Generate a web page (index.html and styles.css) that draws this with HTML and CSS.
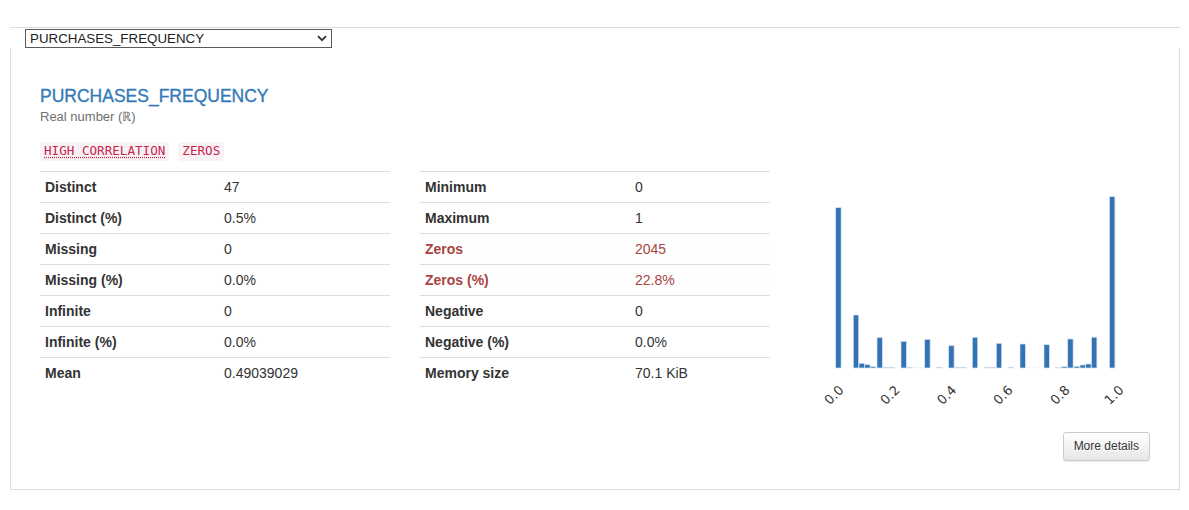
FILE: index.html
```html
<!DOCTYPE html>
<html lang="en">
<head>
<meta charset="utf-8">
<title>PURCHASES_FREQUENCY</title>
<link rel="stylesheet" href="styles.css">
</head>
<body>
<div class="wrap">
  <div class="topbar"></div>
  <div class="picker">
    <div class="select-box">
      <select class="var-select">
        <option>PURCHASES_FREQUENCY</option>
      </select>
      <svg class="chev" width="10" height="7" viewBox="0 0 10 7"><path d="M1 1.2 L5 5.2 L9 1.2" fill="none" stroke="#333" stroke-width="1.8"/></svg>
    </div>
  </div>
  <div class="panel">
    <div class="head">
      <h4 class="var-title">PURCHASES_FREQUENCY</h4>
      <div class="var-type">Real number (ℝ)</div>
      <div class="badges">
        <code class="badge"><abbr class="abbr">HIGH CORRELATION</abbr></code>
        <code class="badge">ZEROS</code>
      </div>
    </div>
    <div class="stats">
      <div class="col">
        <table class="tbl tbl-left">
          <colgroup><col class="c-lab-left"><col></colgroup>
          <tbody>
            <tr><th>Distinct</th><td>47</td></tr>
            <tr><th>Distinct (%)</th><td>0.5%</td></tr>
            <tr><th>Missing</th><td>0</td></tr>
            <tr><th>Missing (%)</th><td>0.0%</td></tr>
            <tr><th>Infinite</th><td>0</td></tr>
            <tr><th>Infinite (%)</th><td>0.0%</td></tr>
            <tr><th>Mean</th><td>0.49039029</td></tr>
          </tbody>
        </table>
      </div>
      <div class="col">
        <table class="tbl tbl-right">
          <colgroup><col class="c-lab-right"><col></colgroup>
          <tbody>
            <tr><th>Minimum</th><td>0</td></tr>
            <tr><th>Maximum</th><td>1</td></tr>
            <tr class="alert"><th>Zeros</th><td>2045</td></tr>
            <tr class="alert"><th>Zeros (%)</th><td>22.8%</td></tr>
            <tr><th>Negative</th><td>0</td></tr>
            <tr><th>Negative (%)</th><td>0.0%</td></tr>
            <tr><th>Memory size</th><td>70.1 KiB</td></tr>
          </tbody>
        </table>
      </div>
      <div class="col">
        <svg class="hist" width="350" height="240" viewBox="0 0 350 240">
          <g fill="#3373b3" stroke="#d3e2f2" stroke-width="0.7">
            <rect x="35.7" y="36.7" width="5.4" height="160.3"/>
            <rect x="53.3" y="144" width="5.4" height="53"/>
            <rect x="59.0" y="192.3" width="5.4" height="4.7"/>
            <rect x="64.7" y="193.7" width="5.4" height="3.3"/>
            <rect x="70.3" y="195.7" width="5.4" height="1.3"/>
            <rect x="77.0" y="166.7" width="5.4" height="30.3"/>
            <rect x="83.0" y="196.2" width="5.4" height="0.8"/>
            <rect x="89.0" y="196.2" width="5.4" height="0.8"/>
            <rect x="101.0" y="170.3" width="5.4" height="26.7"/>
            <rect x="107.0" y="196.2" width="5.4" height="0.8"/>
            <rect x="124.7" y="168.3" width="5.4" height="28.7"/>
            <rect x="136.7" y="196.2" width="5.4" height="0.8"/>
            <rect x="148.7" y="174.7" width="5.4" height="22.3"/>
            <rect x="154.7" y="196.2" width="5.4" height="0.8"/>
            <rect x="160.7" y="196.2" width="5.4" height="0.8"/>
            <rect x="172.3" y="166.3" width="5.4" height="30.7"/>
            <rect x="184.7" y="196.2" width="5.4" height="0.8"/>
            <rect x="190.7" y="196.2" width="5.4" height="0.8"/>
            <rect x="196.3" y="172.3" width="5.4" height="24.7"/>
            <rect x="208.0" y="196.2" width="5.4" height="0.8"/>
            <rect x="220.0" y="173.0" width="5.4" height="24"/>
            <rect x="244.0" y="173.7" width="5.4" height="23.3"/>
            <rect x="255.7" y="196.4" width="5.4" height="0.6"/>
            <rect x="261.7" y="195.7" width="5.4" height="1.3"/>
            <rect x="267.7" y="168.0" width="5.4" height="29"/>
            <rect x="274.0" y="195.3" width="5.4" height="1.7"/>
            <rect x="280.0" y="194.0" width="5.4" height="3"/>
            <rect x="285.7" y="193.0" width="5.4" height="4"/>
            <rect x="291.5" y="166.2" width="5.4" height="30.8"/>
            <rect x="309.5" y="25.7" width="5.4" height="171.3"/>
          </g>
          <g fill="#dfeaf6">
            <rect x="112.5" y="196.5" width="5.4" height="0.6"/>
            <rect x="118.3" y="196.5" width="5.4" height="0.6"/>
            <rect x="226.3" y="196.5" width="5.4" height="0.6"/>
            <rect x="232.3" y="196.5" width="5.4" height="0.6"/>
          </g>
          <g class="ticks" font-family="DejaVu Sans, sans-serif" font-size="13" fill="#333" text-anchor="middle">
            <text x="34" y="228.5" transform="rotate(-45 34 224)">0.0</text>
            <text x="90" y="228.5" transform="rotate(-45 90 224)">0.2</text>
            <text x="146.7" y="228.5" transform="rotate(-45 146.7 224)">0.4</text>
            <text x="203" y="228.5" transform="rotate(-45 203 224)">0.6</text>
            <text x="260" y="228.5" transform="rotate(-45 260 224)">0.8</text>
            <text x="314" y="228.5" transform="rotate(-45 314 224)">1.0</text>
          </g>
        </svg>
      </div>
    </div>
    <div class="foot">
      <button class="btn" type="button">More details</button>
    </div>
  </div>
</div>
</body>
</html>
```
FILE: styles.css
```css
html, body {
  margin: 0;
  padding: 0;
  background: #fff;
}
body {
  font-family: "Liberation Sans", Arial, Helvetica, sans-serif;
  font-size: 14px;
  color: #333;
}
.wrap {
  margin-left: 10px;
  width: 1170px;
}
.topbar {
  height: 27px;
  border-bottom: 1px solid #dddde0;
}
.picker {
  padding: 1px 0 0 15px;
  height: 19px;
}
.select-box {
  position: relative;
  display: inline-block;
  width: 307px;
  height: 19px;
}
.var-select {
  -webkit-appearance: none;
  appearance: none;
  box-sizing: border-box;
  width: 307px;
  height: 19px;
  margin: 0;
  padding: 0 20px 0 4px;
  border: 1px solid #5a5a5a;
  border-radius: 0;
  background: #fff;
  font-family: "Liberation Sans", Arial, sans-serif;
  font-size: 13.333px;
  line-height: 17px;
  color: #222;
}
.chev {
  position: absolute;
  right: 5px;
  top: 6px;
  pointer-events: none;
}
.panel {
  border: 1px solid #dddde0;
  border-top: 0;
  padding: 38px 14px 28px;
}
.head {
  padding: 0 15px;
}
.var-title {
  margin: 0 0 2px;
  font-size: 17.5px;
  line-height: 20px;
  font-weight: 400;
  color: #337ab7;
  -webkit-text-stroke: 0.35px #337ab7;
}
.var-type {
  font-size: 13px;
  line-height: 18px;
  color: #707070;
}
.badges {
  margin-top: 16px;
  height: 19px;
  display: flex;
  gap: 9px;
  align-items: flex-start;
}
.badge {
  display: inline-block;
  padding: 2px 4px;
  font-family: "DejaVu Sans Mono", "Liberation Mono", monospace;
  font-size: 12.6px;
  line-height: 14.5px;
  color: #c7254e;
  background: #f9f2f4;
  border-radius: 4px;
}
.abbr {
  text-decoration: underline dotted;
  text-underline-offset: 2px;
}
.stats {
  display: flex;
  margin-top: 10px;
}
.col {
  width: 380px;
  box-sizing: border-box;
  padding: 0 15px;
}
.tbl {
  width: 100%;
  border-collapse: collapse;
  table-layout: fixed;
}
.c-lab-left { width: 179px; }
.c-lab-right { width: 210px; }
.tbl th, .tbl td {
  padding: 5px;
  line-height: 20px;
  text-align: left;
  vertical-align: top;
  border-top: 1px solid #dddddd;
  white-space: nowrap;
}
.tbl th {
  font-weight: 700;
}
.tbl td {
  font-weight: 400;
}
.tbl tr.alert th, .tbl tr.alert td {
  color: #a94442;
  background: #fefefe;
}
.hist {
  display: block;
}
.foot {
  margin-top: 21px;
  padding: 0 15px;
  display: flex;
  justify-content: flex-end;
}
.btn {
  box-sizing: border-box;
  height: 29px;
  margin: 0;
  padding: 5px 10px;
  font-family: "Liberation Sans", Arial, sans-serif;
  font-size: 12px;
  line-height: 17px;
  color: #333;
  background: linear-gradient(to bottom, #ffffff 0%, #e6e6e6 100%);
  border: 1px solid #cccccc;
  border-radius: 3px;
  box-shadow: 0 1px 1px rgba(0, 0, 0, 0.08);
  text-shadow: 0 1px 0 #fff;
}
```
